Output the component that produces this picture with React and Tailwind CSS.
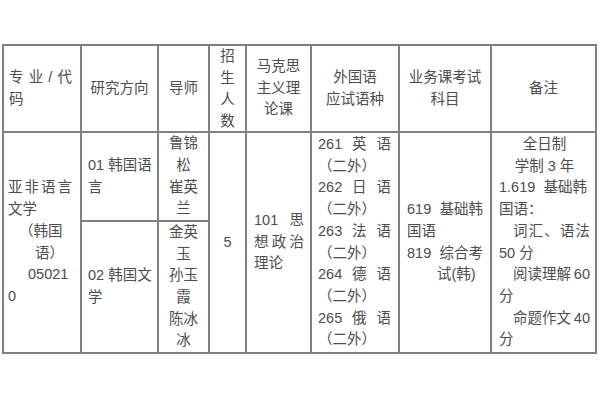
import React from "react";

const J = ({ items, className = "" }) => (
  <div className={"flex justify-between " + className}>
    {items.map((s, i) => (
      <span key={i}>{s}</span>
    ))}
  </div>
);

const Cell = ({ className = "", children }) => (
  <div className={"bg-white flex flex-col justify-center " + className}>{children}</div>
);

export default function App() {
  return (
    <div className="w-[600px] h-[400px] bg-white pt-[44px] pl-[2px] overflow-hidden">
      <div className="grid w-fit bg-[#808080] p-[2px] gap-[2px] grid-cols-[76px_75px_49px_35px_63px_86px_90px_103px] grid-rows-[85px_87px_130px] text-[14.5px] leading-[21.7px] text-[#4d4d4d] font-['Liberation_Sans','Noto_Sans_CJK_SC',sans-serif] whitespace-nowrap">
        {/* header */}
        <Cell>
          <J className="pl-[5px] pr-[8px]" items={["专", "业", "/", "代"]} />
          <div className="pl-[5px]">码</div>
        </Cell>
        <Cell className="items-center">
          <div>研究方向</div>
        </Cell>
        <Cell className="items-center">
          <div>导师</div>
        </Cell>
        <div className="bg-white flex flex-col items-center justify-start">
          <div>招</div>
          <div>生</div>
          <div>人</div>
          <div>数</div>
        </div>
        <Cell className="items-center">
          <div>马克思</div>
          <div>主义理</div>
          <div>论课</div>
        </Cell>
        <Cell className="items-center">
          <div>外国语</div>
          <div>应试语种</div>
        </Cell>
        <Cell className="items-center">
          <div>业务课考试</div>
          <div>科目</div>
        </Cell>
        <Cell className="items-center">
          <div>备注</div>
        </Cell>

        {/* body */}
        <Cell className="row-span-2">
          <J className="pl-[4px] pr-[8px]" items={["亚", "非", "语", "言"]} />
          <div className="pl-[4px]">文学</div>
          <div className="pl-[15px]">（韩国</div>
          <div className="pl-[31px]">语）</div>
          <div className="pl-[24px]">05021</div>
          <div className="pl-[4px]">0</div>
        </Cell>
        <Cell className="pl-[6px]">
          <div>01 韩国语</div>
          <div>言</div>
        </Cell>
        <Cell className="items-center">
          <div>鲁锦</div>
          <div>松</div>
          <div>崔英</div>
          <div>兰</div>
        </Cell>
        <Cell className="row-span-2 items-center">
          <div>5</div>
        </Cell>
        <Cell className="row-span-2 pl-[7px] pr-[6px]">
          <J items={["101", "思"]} />
          <J items={["想", "政", "治"]} />
          <div>理论</div>
        </Cell>
        <Cell className="row-span-2 pl-[6px] pr-[7px]">
          <J items={["261", "英", "语"]} />
          <div>（二外）</div>
          <J items={["262", "日", "语"]} />
          <div>（二外）</div>
          <J items={["263", "法", "语"]} />
          <div>（二外）</div>
          <J items={["264", "德", "语"]} />
          <div>（二外）</div>
          <J items={["265", "俄", "语"]} />
          <div>（二外）</div>
        </Cell>
        <Cell className="row-span-2 pl-[7px] pr-[7px]">
          <J items={["619", "基础韩"]} />
          <div>国语</div>
          <J items={["819", "综合考"]} />
          <div className="pl-[30px]">试(韩)</div>
        </Cell>
        <Cell className="row-span-2 pl-[7px] pr-[5px]">
          <div className="text-center">全日制</div>
          <div className="text-center">学制 3 年</div>
          <J className="pr-[3px]" items={["1.619", "基础韩"]} />
          <div>国语：</div>
          <J className="pl-[14px]" items={["词", "汇", "、", "语", "法"]} />
          <div>50 分</div>
          <J className="pl-[14px]" items={["阅读理解", "60"]} />
          <div>分</div>
          <J className="pl-[14px]" items={["命题作文", "40"]} />
          <div>分</div>
        </Cell>

        <Cell className="pl-[6px]">
          <div>02 韩国文</div>
          <div>学</div>
        </Cell>
        <Cell className="items-center">
          <div>金英</div>
          <div>玉</div>
          <div>孙玉</div>
          <div>霞</div>
          <div>陈冰</div>
          <div>冰</div>
        </Cell>
      </div>
    </div>
  );
}
